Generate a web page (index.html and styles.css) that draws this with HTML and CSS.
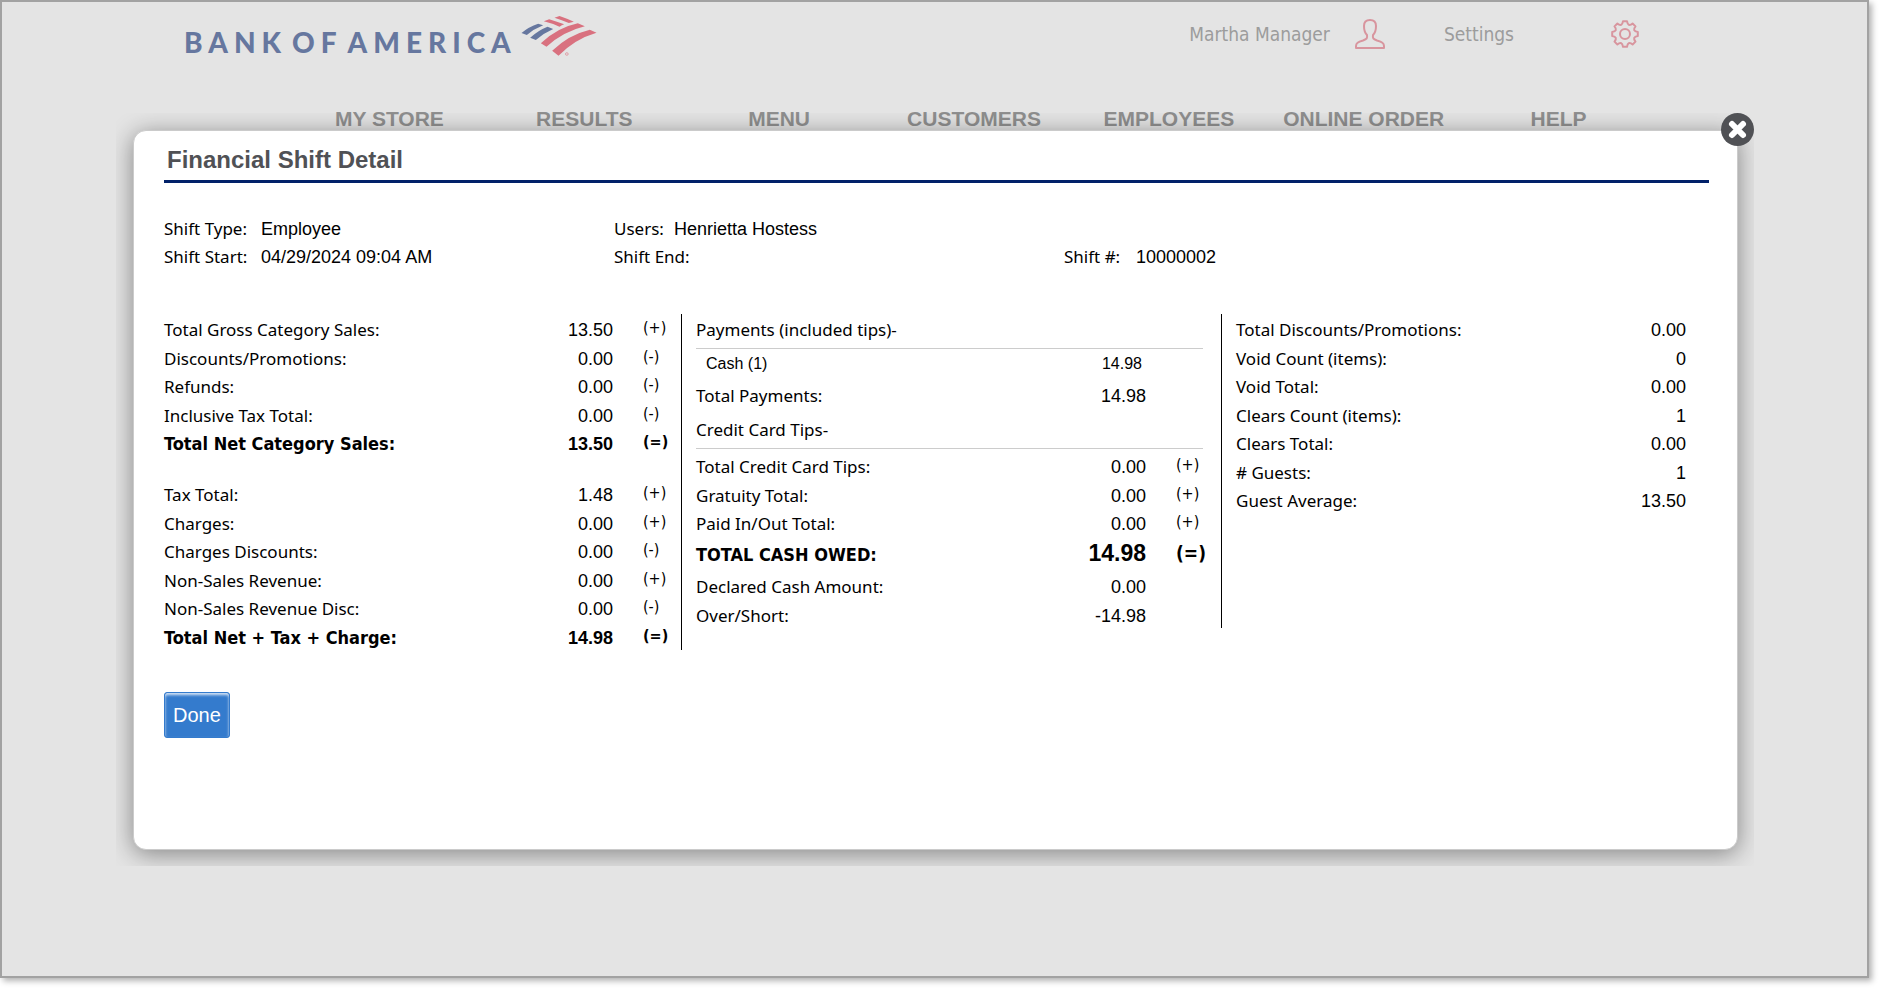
FILE: index.html
```html
<!DOCTYPE html>
<html lang="en">
<head>
<meta charset="utf-8">
<title>Financial Shift Detail</title>
<link rel="stylesheet" href="styles.css">
</head>
<body>
<div class="frame">
  <header>
    <div class="topbar">
      <a class="logo" href="#">
        <span class="logo-text"><span>BANK</span> <span>OF</span> <span>AMERICA</span></span>
        <svg class="logo-mark" viewBox="1053 48 225 120" aria-hidden="true">
          <g fill="#66779f">
            <path d="M1053 99Q1075 80 1103 71L1118 76Q1090 87 1069 105Z"/>
            <path d="M1079 113Q1103 91 1131 80L1148 87Q1120 99 1096 120Z"/>
          </g>
          <g fill="#d9717f">
            <path d="M1152 53L1167 48Q1190 56 1210 65L1195 69Q1174 60 1152 53Z"/>
            <path d="M1120 64L1136 58Q1158 65 1181 73Q1174 76 1167 80Q1144 70 1120 64Z"/>
            <path d="M1111 130Q1160 83 1222 70L1243 79Q1180 94 1128 140Z"/>
            <path d="M1145 152Q1195 104 1258 89L1278 98Q1213 117 1164 167Z"/>
          </g>
          <circle cx="1189" cy="162" r="4" fill="none" stroke="#e0a0a8" stroke-width="3"/>
        </svg>
      </a>
      <div class="account">
        <a class="account-link user" href="#">Martha Manager
          <svg class="icon-user" viewBox="0 0 30 30" aria-hidden="true"><path d="M15 1C11 1 9 3 9 7C9 11 10 14 12 16C12.500 19 12 20 8 21.500C3 23 1 24 1 27V29H29V27C29 24 27 23 22 21.500C18 20 17.500 19 18 16C20 14 21 11 21 7C21 3 19 1 15 1Z"/></svg>
        </a>
        <a class="account-link settings" href="#">Settings
          <svg class="icon-gear" viewBox="0 0 28 28" aria-hidden="true"><circle cx="14" cy="14" r="5"/><path d="M12 1.200H16Q16.500 4.200 17.800 4.800Q19.500 5.300 21.600 3.500L24.500 6.400Q22.700 8.500 23.200 10.200Q23.800 11.500 26.800 12V16Q23.800 16.500 23.200 17.800Q22.700 19.500 24.500 21.600L21.600 24.500Q19.500 22.700 17.800 23.200Q16.500 23.800 16 26.800H12Q11.500 23.800 10.200 23.200Q8.500 22.700 6.400 24.500L3.500 21.600Q5.300 19.500 4.800 17.800Q4.200 16.500 1.200 16V12Q4.200 11.500 4.800 10.200Q5.300 8.500 3.500 6.400L6.400 3.500Q8.500 5.300 10.200 4.800Q11.500 4.200 12 1.200Z"/></svg>
        </a>
      </div>
    </div>
    <nav class="nav">
      <a href="#">MY STORE</a>
      <a href="#">RESULTS</a>
      <a href="#">MENU</a>
      <a href="#">CUSTOMERS</a>
      <a href="#">EMPLOYEES</a>
      <a href="#">ONLINE ORDER</a>
      <a href="#">HELP</a>
    </nav>
  </header>

  <div class="overlay">
    <main class="modal" role="dialog" aria-labelledby="dialog-title">
      <h1 id="dialog-title">Financial Shift Detail</h1>

      <dl class="info">
        <div class="info-item wide"><dt>Shift Type:</dt><dd>Employee</dd></div>
        <div class="info-item"><dt>Users:</dt><dd>Henrietta Hostess</dd></div>
        <div class="info-item wide start"><dt>Shift Start:</dt><dd>04/29/2024 09:04 AM</dd></div>
        <div class="info-item"><dt>Shift End:</dt><dd></dd></div>
        <div class="info-item number"><dt>Shift #:</dt><dd>10000002</dd></div>
      </dl>

      <div class="columns">
        <section class="column sales">
          <table class="figures">
            <tbody>
              <tr><th scope="row">Total Gross Category Sales:</th><td>13.50</td><td class="sign">(+)</td></tr>
              <tr><th scope="row">Discounts/Promotions:</th><td>0.00</td><td class="sign">(-)</td></tr>
              <tr><th scope="row">Refunds:</th><td>0.00</td><td class="sign">(-)</td></tr>
              <tr><th scope="row">Inclusive Tax Total:</th><td>0.00</td><td class="sign">(-)</td></tr>
              <tr class="total"><th scope="row">Total Net Category Sales:</th><td>13.50</td><td class="sign">(=)</td></tr>
            </tbody>
            <tbody>
              <tr><th scope="row">Tax Total:</th><td>1.48</td><td class="sign">(+)</td></tr>
              <tr><th scope="row">Charges:</th><td>0.00</td><td class="sign">(+)</td></tr>
              <tr><th scope="row">Charges Discounts:</th><td>0.00</td><td class="sign">(-)</td></tr>
              <tr><th scope="row">Non-Sales Revenue:</th><td>0.00</td><td class="sign">(+)</td></tr>
              <tr><th scope="row">Non-Sales Revenue Disc:</th><td>0.00</td><td class="sign">(-)</td></tr>
              <tr class="total"><th scope="row">Total Net + Tax + Charge:</th><td>14.98</td><td class="sign">(=)</td></tr>
            </tbody>
          </table>
        </section>

        <section class="column payments">
          <h2>Payments (included tips)-</h2>
          <table class="figures">
            <tbody>
              <tr class="detail"><th scope="row">Cash (1)</th><td>14.98</td><td class="sign"></td></tr>
              <tr class="subtotal"><th scope="row">Total Payments:</th><td>14.98</td><td class="sign"></td></tr>
            </tbody>
          </table>
          <h2>Credit Card Tips-</h2>
          <table class="figures tips">
            <tbody>
              <tr><th scope="row">Total Credit Card Tips:</th><td>0.00</td><td class="sign">(+)</td></tr>
              <tr><th scope="row">Gratuity Total:</th><td>0.00</td><td class="sign">(+)</td></tr>
              <tr><th scope="row">Paid In/Out Total:</th><td>0.00</td><td class="sign">(+)</td></tr>
              <tr class="total owed"><th scope="row">TOTAL CASH OWED:</th><td>14.98</td><td class="sign">(=)</td></tr>
              <tr><th scope="row">Declared Cash Amount:</th><td>0.00</td><td class="sign"></td></tr>
              <tr><th scope="row">Over/Short:</th><td>-14.98</td><td class="sign"></td></tr>
            </tbody>
          </table>
        </section>

        <section class="column counts">
          <table class="figures">
            <tbody>
              <tr><th scope="row">Total Discounts/Promotions:</th><td>0.00</td></tr>
              <tr><th scope="row">Void Count (items):</th><td>0</td></tr>
              <tr><th scope="row">Void Total:</th><td>0.00</td></tr>
              <tr><th scope="row">Clears Count (items):</th><td>1</td></tr>
              <tr><th scope="row">Clears Total:</th><td>0.00</td></tr>
              <tr><th scope="row"># Guests:</th><td>1</td></tr>
              <tr><th scope="row">Guest Average:</th><td>13.50</td></tr>
            </tbody>
          </table>
        </section>
      </div>

      <button class="done" type="button">Done</button>
    </main>
    <button class="close" type="button" aria-label="Close">
      <svg viewBox="0 0 33 33" aria-hidden="true"><path d="M11 11L22 22M22 11L11 22"/></svg>
    </button>
  </div>
</div>
</body>
</html>
```

FILE: styles.css
```css
* {
  box-sizing: border-box;
}

body {
  margin: 0;
  padding: 0 15px 15px 0;
  background: #fff;
  color: #000;
  font-family: "Noto Sans", sans-serif;
  font-size: 17px;
  line-height: 24px;
}

a {
  color: inherit;
  text-decoration: none;
}

.frame {
  position: relative;
  min-height: calc(100vh - 15px);
  border: 2px solid #a2a2a2;
  background: #e4e4e4;
  box-shadow: 3px 3px 6px rgba(0, 0, 0, 0.3);
}

/* Header */

.topbar {
  display: flex;
  justify-content: space-between;
  align-items: flex-start;
  padding: 14px 228px 43px 182px;
}

.logo {
  display: flex;
  align-items: flex-start;
  gap: 4px;
  height: 48px;
}

.logo-text {
  display: flex;
  gap: 5px;
  margin-top: 4px;
  color: #66779f;
  font: 900 28px/44px Lato, sans-serif;
  letter-spacing: 6px;
  white-space: nowrap;
}

.logo-mark {
  width: 76px;
  height: 40px;
}

.account {
  display: flex;
  gap: 59px;
  height: 36px;
  color: #9c9c9c;
  font: 19px/24px "DejaVu Sans Condensed", "DejaVu Sans", sans-serif;
}

.account-link {
  display: flex;
  align-items: center;
  white-space: nowrap;
}

.user {
  gap: 25px;
}

.settings {
  gap: 97px;
}

.account svg {
  fill: none;
  stroke: #d8959e;
  stroke-width: 2;
  stroke-linejoin: round;
}

.icon-user {
  width: 30px;
  height: 30px;
}

.icon-gear {
  width: 28px;
  height: 28px;
}

.nav {
  display: grid;
  grid-template-columns: repeat(7, 1fr);
  padding: 0 211px 0 290px;
  color: #8f8f8f;
  font: bold 21px/24px "Liberation Sans", Arial, sans-serif;
  text-align: center;
  white-space: nowrap;
}

/* Dialog */

.overlay {
  position: absolute;
  top: 111px;
  left: 114px;
  right: 113px;
  padding: 17px 16px 16px 17px;
  overflow: hidden;
}

.modal {
  padding: 15px 28px 111px 30px;
  border: 1px solid #cbcbcb;
  border-radius: 13px;
  background: #fff;
  box-shadow: 0 4px 24px rgba(0, 0, 0, 0.42);
}

.close {
  position: absolute;
  top: 0;
  right: 0;
  width: 33px;
  height: 33px;
  padding: 0;
  border: 0;
  border-radius: 50%;
  background: #505155;
}

.close svg {
  display: block;
  fill: none;
  stroke: #fff;
  stroke-width: 6;
  stroke-linecap: round;
}

h1 {
  margin: 0;
  padding: 0 3px 6px;
  border-bottom: 3px solid #012169;
  color: #505155;
  font: bold 24px/28px "Liberation Sans", Arial, sans-serif;
}

.info {
  display: grid;
  grid-template-columns: 450fr 450fr 645fr;
  margin: 32px 0 43px;
  line-height: 28px;
}

.info-item {
  display: flex;
  align-items: baseline;
  gap: 10px;
}

.start {
  grid-column: 1;
}

.wide dt {
  min-width: 87px;
}

.number dt {
  min-width: 62px;
}

dd {
  margin: 0;
  font-family: "Liberation Sans", Arial, sans-serif;
  font-size: 18px;
}

.columns {
  display: grid;
  grid-template-columns: 518fr 540fr 487fr;
  align-items: start;
  margin-bottom: 42px;
}

.column {
  padding-top: 4px;
}

.sales {
  border-right: 1px solid #000;
}

.payments {
  padding-left: 14px;
  padding-right: 18px;
  border-right: 1px solid #000;
}

.counts {
  padding-left: 14px;
  padding-right: 23px;
}

h2 {
  margin: 0 0 3px;
  padding-bottom: 6px;
  border-bottom: 1px solid #ccc;
  font-size: 17px;
  font-weight: normal;
}

.figures {
  width: 100%;
  border-collapse: collapse;
  table-layout: fixed;
}

.figures th,
.figures td {
  padding: 0;
  font-weight: normal;
  text-align: left;
  vertical-align: baseline;
  white-space: nowrap;
}

.figures td {
  width: 90px;
  font-family: "Liberation Sans", Arial, sans-serif;
  font-size: 18px;
  text-align: right;
}

.figures .sign {
  width: 68px;
  padding-left: 30px;
  font: 16px/20px "DejaVu Sans Condensed", "DejaVu Sans", sans-serif;
  text-align: left;
  vertical-align: top;
}

.payments .figures .sign {
  width: 57px;
}

.figures tr {
  height: 29px;
}

.figures tr:nth-child(even) {
  height: 28px;
}

.figures tbody:not(:last-child) tr:last-child {
  height: 51px;
}

.figures tr:last-child {
  height: 24px;
}

.figures .total th,
.figures .total td {
  font-weight: bold;
}

.figures .total th {
  font-family: "DejaVu Sans Condensed", "DejaVu Sans", sans-serif;
  font-size: 18px;
}

.figures .detail {
  height: 32px;
}

.figures .detail th,
.figures .detail td {
  font-family: "Liberation Sans", Arial, sans-serif;
  font-size: 16px;
}

.figures .detail th {
  padding-left: 10px;
}

.figures .detail td {
  padding-right: 4px;
}

.figures .subtotal:last-child {
  height: 34px;
}

.tips {
  margin-top: 6px;
}

.figures .owed:nth-child(even) {
  height: 34px;
}

.figures .owed td {
  font-size: 23px;
}

.figures .owed .sign {
  font-size: 19px;
  line-height: 24px;
}

.done {
  display: block;
  height: 46px;
  padding: 0 8px;
  border: 1px solid #347bcd;
  border-radius: 3px;
  background: #347bcd;
  box-shadow: inset 0 2px 3px rgba(255, 255, 255, 0.8);
  color: #fff;
  font: 20px/24px "Liberation Sans", Arial, sans-serif;
}
```
